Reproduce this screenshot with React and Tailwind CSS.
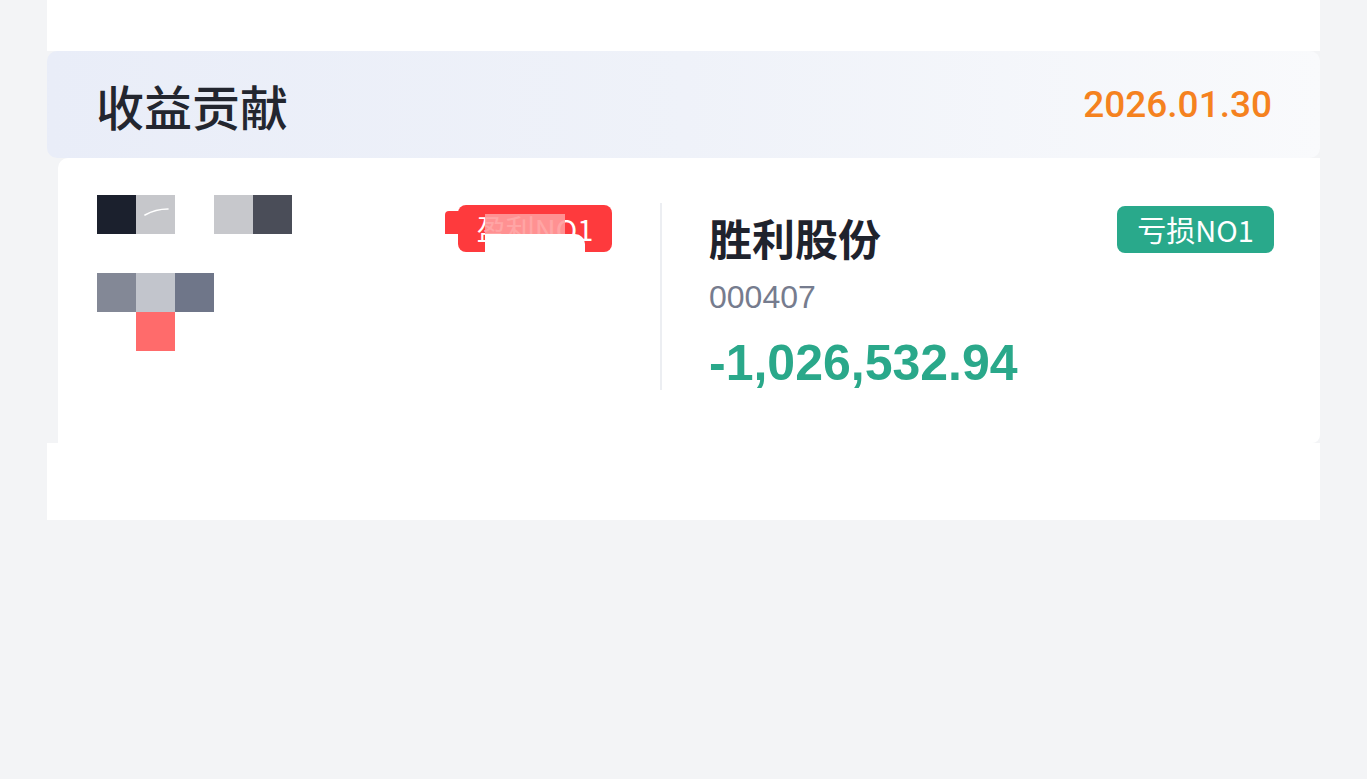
import React from "react";

const cn = '"Noto Sans CJK SC", "Noto Sans", sans-serif';
const num = '"Liberation Sans", Arial, sans-serif';

function Mosaic() {
  const cells = [
    "#1b202d", "#c6c7cb", null, "#c7c8cc", "#4a4d58",
    null, null, null, null, null,
    "#838896", "#c2c5cc", "#6f7689", null, null,
    null, "#ff6b6b", null, null, null,
  ];
  return (
    <div className="relative grid grid-cols-[repeat(5,39px)] grid-rows-[repeat(4,39px)]">
      {cells.map((c, i) => (
        <div key={i} style={c ? { backgroundColor: c } : undefined} />
      ))}
      <svg className="absolute left-[47px] top-[12px]" width="26" height="10" viewBox="0 0 26 10">
        <path d="M1 8 C8 4 14 2 24 2" stroke="#ffffff" strokeWidth="1.6" fill="none" strokeLinecap="round" />
      </svg>
    </div>
  );
}

export default function App() {
  return (
    <div className="min-h-[779px] w-full bg-[#f3f4f6]">
      <div className="ml-[47px] w-[1273px]">
        <div className="h-[51px] bg-white" />
        <div className="flex h-[107px] items-center justify-between rounded-[10px] bg-gradient-to-r from-[#e9edf8] via-[#eff2f9] to-[#f9fafc] pl-[49px] pr-[48px]">
          <div className="text-[48px] font-medium leading-none text-[#23262f]" style={{ fontFamily: cn }}>
            收益贡献
          </div>
          <div className="text-[37px] font-medium leading-none text-[#f5821f]" style={{ fontFamily: 'Roboto, "Liberation Sans", sans-serif' }}>
            2026.01.30
          </div>
        </div>
        <div className="flex h-[285px]">
          <div className="w-[11px] bg-[#f3f4f6]" />
          <div className="flex flex-1 rounded-br-[8px] rounded-tl-[10px] bg-white">
            <div className="flex w-[602px] shrink-0 items-start justify-between pl-[39px] pr-[48px] pt-[37px]">
              <Mosaic />
              <div className="relative mt-[10px]">
                <div
                  className="flex h-[47px] w-[154px] items-center justify-center rounded-[8px] bg-[#fe3a3d] text-[29px] leading-none text-white"
                  style={{ fontFamily: cn }}
                >
                  盈利NO1
                </div>
                <div className="absolute left-[-13px] top-[6px] h-[23px] w-[14px] rounded-tl-[4px] bg-[#fe3a3d]" />
                <div className="absolute left-[27px] top-[9px] h-[20px] w-[80px] bg-[#ff9b9b]/90" />
                <div className="absolute left-[27px] top-[29px] h-[18px] w-[100px] rounded-tr-[10px] bg-white" />
              </div>
            </div>
            <div className="mt-[45px] h-[187px] w-[2px] shrink-0 bg-[#eceef2]" />
            <div className="flex flex-1 flex-col pl-[47px] pr-[46px] pt-[48px]">
              <div className="flex items-start justify-between">
                <div className="mt-[7px] text-[43px] font-bold leading-[48px] text-[#1f232d]" style={{ fontFamily: cn }}>
                  胜利股份
                </div>
                <div
                  className="flex h-[47px] w-[157px] items-center justify-center rounded-[8px] bg-[#29a98b] text-[29px] leading-none text-white"
                  style={{ fontFamily: cn }}
                >
                  亏损NO1
                </div>
              </div>
              <div className="mt-[16px] text-[32px] leading-[40px] text-[#767c8e]" style={{ fontFamily: num }}>
                000407
              </div>
              <div className="mt-[18px] text-[50px] font-bold leading-[56px] text-[#2aa88a]" style={{ fontFamily: num }}>
                -1,026,532.94
              </div>
            </div>
          </div>
        </div>
        <div className="h-[77px] bg-white" />
      </div>
    </div>
  );
}
